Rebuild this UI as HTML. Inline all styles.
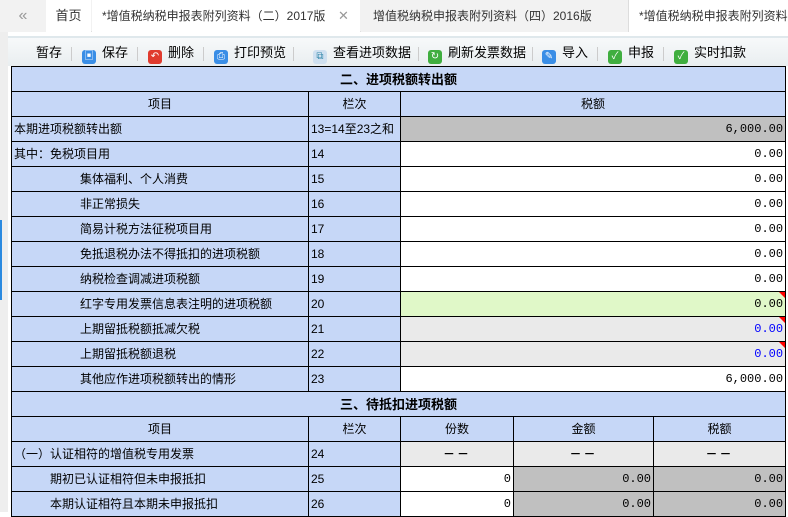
<!DOCTYPE html><html><head><meta charset="utf-8"><style>
*{margin:0;padding:0;box-sizing:border-box}
body{width:788px;height:512px;overflow:hidden;background:#fff;font-family:"Liberation Sans","Noto Sans CJK SC",sans-serif;font-size:12px;color:#000;position:relative}
.tabs{position:absolute;left:0;top:0;width:788px;height:32px;background:#f2f2f2;border-bottom:1px solid #e0e0e0}
.tab{position:absolute;top:0;height:32px;line-height:32px;font-size:12px;color:#333;white-space:nowrap;overflow:hidden}
.x{color:#999;font-size:13px;position:absolute;top:0}
.tool{position:absolute;left:8px;top:36px;width:780px;height:30px;background:linear-gradient(#f7f9fa,#e9eef0);border-top:2px solid #dfe8ec}
.tb{position:absolute;top:5px;height:20px;line-height:20px;font-size:13px;white-space:nowrap}
.ic{display:inline-block;width:14px;height:14px;border-radius:3px;vertical-align:-2px;margin-right:6px;color:#fff;font-size:10px;line-height:14px;text-align:center}
.sep{position:absolute;top:9px;width:1px;height:14px;background:#ccc}
table{position:absolute;left:11px;top:66px;border-collapse:collapse;table-layout:fixed;width:774px}
td{border:1px solid #000;height:25px;padding:0 2px;background:#c6d7f7;white-space:nowrap;overflow:hidden;font-size:12px;line-height:23px}
.c{text-align:center}.h{text-align:center;font-weight:bold;font-size:13px}
.w{background:#fff}.g{background:#c0c0c0}.l{background:#eaeaea}.gr{background:#e0f8c8}
.n{text-align:right;font-family:"Liberation Mono","DejaVu Sans Mono",monospace;font-size:12px;position:relative}
.b{color:#0000ff}
.i1{padding-left:68px}.i2{padding-left:38px}
.tri{position:absolute;right:0;top:0;width:0;height:0;border-left:6px solid transparent;border-top:6px solid #f00}
.d{font-weight:bold;letter-spacing:2px}
</style></head><body>
<div class="tabs">
<div class="tab" style="left:0;width:46px;background:#f2f2f2;color:#999;text-align:center;font-size:16px">«</div>
<div class="tab" style="left:46px;width:45px;background:#fff;text-align:center;font-size:13px">首页</div>
<div class="tab" style="left:92px;width:268px;background:#fff;padding-left:10px">*增值税纳税申报表附列资料（二）2017版<span class="x" style="left:246px">✕</span></div>
<div class="tab" style="left:361px;width:276px;background:#f2f2f2;padding-left:12px">增值税纳税申报表附列资料（四）2016版<span class="x" style="left:290px">✕</span></div>
<div class="tab" style="left:628px;width:160px;background:#fff;padding-left:10px;border-left:1px solid #ddd">*增值税纳税申报表附列资料</div>
</div>
<div style="position:absolute;left:0;top:32px;width:8px;height:480px;background:#eee"></div>
<div style="position:absolute;left:0;top:220px;width:2px;height:80px;background:#2b8ae0"></div>
<div class="tool">
<div class="tb" style="left:28px">暂存</div><div class="sep" style="left:63px"></div>
<div class="tb" style="left:74px"><span class="ic" style="background:#3a8ee6">▣</span>保存</div><div class="sep" style="left:129px"></div>
<div class="tb" style="left:140px"><span class="ic" style="background:#e03b2e">↶</span>删除</div><div class="sep" style="left:195px"></div>
<div class="tb" style="left:206px"><span class="ic" style="background:#3a8ee6">⎙</span>打印预览</div><div class="sep" style="left:285px"></div>
<div class="tb" style="left:305px"><span class="ic" style="background:#cfe0f0;color:#38a">⧉</span>查看进项数据</div><div class="sep" style="left:410px"></div>
<div class="tb" style="left:420px"><span class="ic" style="background:#3fae3f">↻</span>刷新发票数据</div><div class="sep" style="left:524px"></div>
<div class="tb" style="left:534px"><span class="ic" style="background:#3a8ee6">✎</span>导入</div><div class="sep" style="left:589px"></div>
<div class="tb" style="left:600px"><span class="ic" style="background:#3fae3f">✓</span>申报</div><div class="sep" style="left:655px"></div>
<div class="tb" style="left:666px"><span class="ic" style="background:#3fae3f">✓</span>实时扣款</div>
</div>
<table>
<colgroup><col style="width:297px"><col style="width:92px"><col style="width:113px"><col style="width:140px"><col style="width:132px"></colgroup>
<tr><td colspan="5" class="h">二、进项税额转出额</td></tr>
<tr><td class="c">项目</td><td class="c">栏次</td><td colspan="3" class="c">税额</td></tr>
<tr><td>本期进项税额转出额</td><td>13=14至23之和</td><td colspan="3" class="n g">6,000.00</td></tr>
<tr><td>其中：免税项目用</td><td>14</td><td colspan="3" class="n w">0.00</td></tr>
<tr><td class="i1">集体福利、个人消费</td><td>15</td><td colspan="3" class="n w">0.00</td></tr>
<tr><td class="i1">非正常损失</td><td>16</td><td colspan="3" class="n w">0.00</td></tr>
<tr><td class="i1">简易计税方法征税项目用</td><td>17</td><td colspan="3" class="n w">0.00</td></tr>
<tr><td class="i1">免抵退税办法不得抵扣的进项税额</td><td>18</td><td colspan="3" class="n w">0.00</td></tr>
<tr><td class="i1">纳税检查调减进项税额</td><td>19</td><td colspan="3" class="n w">0.00</td></tr>
<tr><td class="i1">红字专用发票信息表注明的进项税额</td><td>20</td><td colspan="3" class="n gr"><span class="tri"></span>0.00</td></tr>
<tr><td class="i1">上期留抵税额抵减欠税</td><td>21</td><td colspan="3" class="n l b"><span class="tri"></span>0.00</td></tr>
<tr><td class="i1">上期留抵税额退税</td><td>22</td><td colspan="3" class="n l b"><span class="tri"></span>0.00</td></tr>
<tr><td class="i1">其他应作进项税额转出的情形</td><td>23</td><td colspan="3" class="n w">6,000.00</td></tr>
<tr><td colspan="5" class="h">三、待抵扣进项税额</td></tr>
<tr><td class="c">项目</td><td class="c">栏次</td><td class="c">份数</td><td class="c">金额</td><td class="c">税额</td></tr>
<tr><td>（一）认证相符的增值税专用发票</td><td>24</td><td class="c l d">－－</td><td class="c l d">－－</td><td class="c l d">－－</td></tr>
<tr><td class="i2">期初已认证相符但未申报抵扣</td><td>25</td><td class="n w">0</td><td class="n g">0.00</td><td class="n g">0.00</td></tr>
<tr><td class="i2">本期认证相符且本期未申报抵扣</td><td>26</td><td class="n w">0</td><td class="n g">0.00</td><td class="n g">0.00</td></tr>
</table>
</body></html>
